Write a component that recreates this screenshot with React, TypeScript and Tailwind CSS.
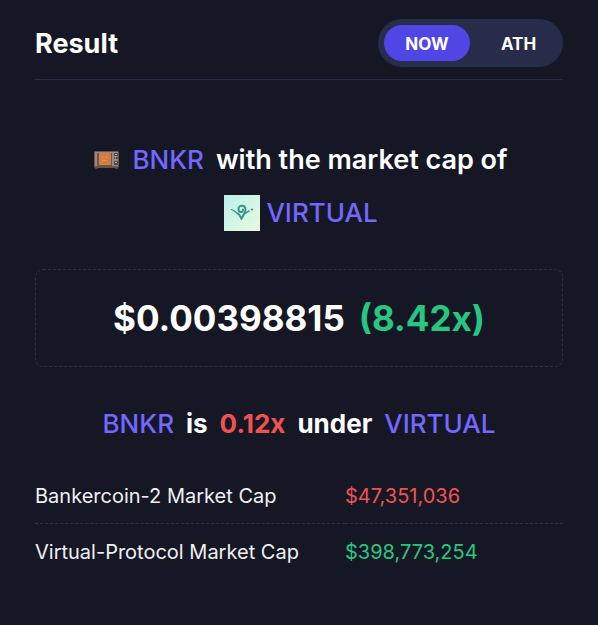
import React from 'react';

const Bankr = () => (
  <svg viewBox="0 0 26 22" className="h-[22px] w-[26px]" aria-hidden="true">
    <path d="M1 2h23l1 1v15l-1 1H1l-1-1V3z" fill="#62564f" />
    <path d="M1 3h23v14H1z" fill="#948a82" />
    <path d="M3 4h15v13H3z" fill="#70534a" />
    <rect x="5" y="4" width="12" height="12" fill="#d57c40" />
    <path d="M8 7h1v2H8zM12 7h1v2h-1zM8 11h5v1H8z" fill="#e4974d" />
    <path d="M20 4h4v3h-4zM20 8h1v2h-1zM22 8h2v2h-2zM20 12h4v4h-4z" fill="#514c49" />
    <path d="M21 5h2v1h-2zM21 13h2v1h-2z" fill="#b9ada1" />
    <path d="M1 19h3v1H1zM21 19h3v1h-3z" fill="#4c423d" />
  </svg>
);

const Virtual = () => (
  <svg viewBox="0 0 36 36" className="h-9 w-9" aria-hidden="true">
    <defs>
      <linearGradient id="virtualBg" x1="0" y1="0" x2="1" y2="1">
        <stop offset="0" stopColor="#bdefee" />
        <stop offset="1" stopColor="#e7fbdc" />
      </linearGradient>
    </defs>
    <rect width="36" height="36" fill="url(#virtualBg)" />
    <g fill="none" stroke="#36968f" strokeLinecap="round" strokeLinejoin="round">
      <path d="M7.500 14.500c3 1 4 3 6.500 4.500" strokeWidth="1.300" />
      <path d="M14 18.500c1.500 1 2.500 3 3.500 5.500 1-3 4-6 4-9.500 0-5-7-5-7-.5 0 4 4.500 4 4.500.5" strokeWidth="2" />
      <path d="M19 20.500c2-2.500 4-3.500 6-4.500" strokeWidth="1.500" />
    </g>
    <circle cx="28" cy="14.500" r="1" fill="#287e7b" />
  </svg>
);

const marketCaps = [
  { label: 'Bankercoin-2 Market Cap', value: '$47,351,036', color: 'text-[#ef5350]' },
  { label: 'Virtual-Protocol Market Cap', value: '$398,773,254', color: 'text-[#28c781]' },
];

export default function App() {
  return (
    <main className="min-h-screen bg-[#161725] px-[35px] pt-[19px] font-['Inter','Liberation_Sans',sans-serif] text-white">
      <header className="flex items-center justify-between border-b border-[#282d45] pb-3">
        <h1 className="pt-0.5 text-[27px] font-bold">Result</h1>
        <div className="flex gap-2.5 rounded-full bg-[#262c49] p-1.5 text-[17px] font-bold">
          <button className="h-9 w-[86px] rounded-full bg-[#5046e5] pt-1">NOW</button>
          <button className="h-9 w-[77px] rounded-full pt-1">ATH</button>
        </div>
      </header>

      <section className="pt-[53px] pl-1 text-center text-[27px] leading-[53px] font-semibold">
        <div className="flex items-center justify-center gap-3">
          <Bankr />
          <span className="text-[26px] font-medium text-[#7367ff]">BNKR</span>
          <span>with the market cap of</span>
        </div>
        <div className="flex items-center justify-center gap-1.5">
          <Virtual />
          <span className="text-[26px] font-medium text-[#7367ff]">VIRTUAL</span>
        </div>
      </section>

      <div className="mt-[30px] flex h-[98px] items-center justify-center gap-3.5 rounded-lg border border-dashed border-[#2b3049] text-[35px] font-bold">
        <span>$0.00398815</span>
        <span className="text-[#28c781]">(8.42x)</span>
      </div>

      <p className="mt-[37px] flex items-center justify-center gap-3 text-[26px] leading-10 font-bold">
        <span className="font-medium text-[#7367ff]">BNKR</span>
        <span>is</span>
        <span className="text-[#ef5350]">0.12x</span>
        <span>under</span>
        <span className="font-medium text-[#7367ff]">VIRTUAL</span>
      </p>

      <table className="mt-[23px] w-full text-left text-xl text-[#f0f0f2]">
        <tbody>
          {marketCaps.map((item) => (
            <tr key={item.label} className="h-14 border-b border-dashed border-[#2b3152] last:border-0">
              <th className="w-[310px] pt-0.5 font-normal">{item.label}</th>
              <td className={`pt-0.5 ${item.color}`}>{item.value}</td>
            </tr>
          ))}
        </tbody>
      </table>
    </main>
  );
}
